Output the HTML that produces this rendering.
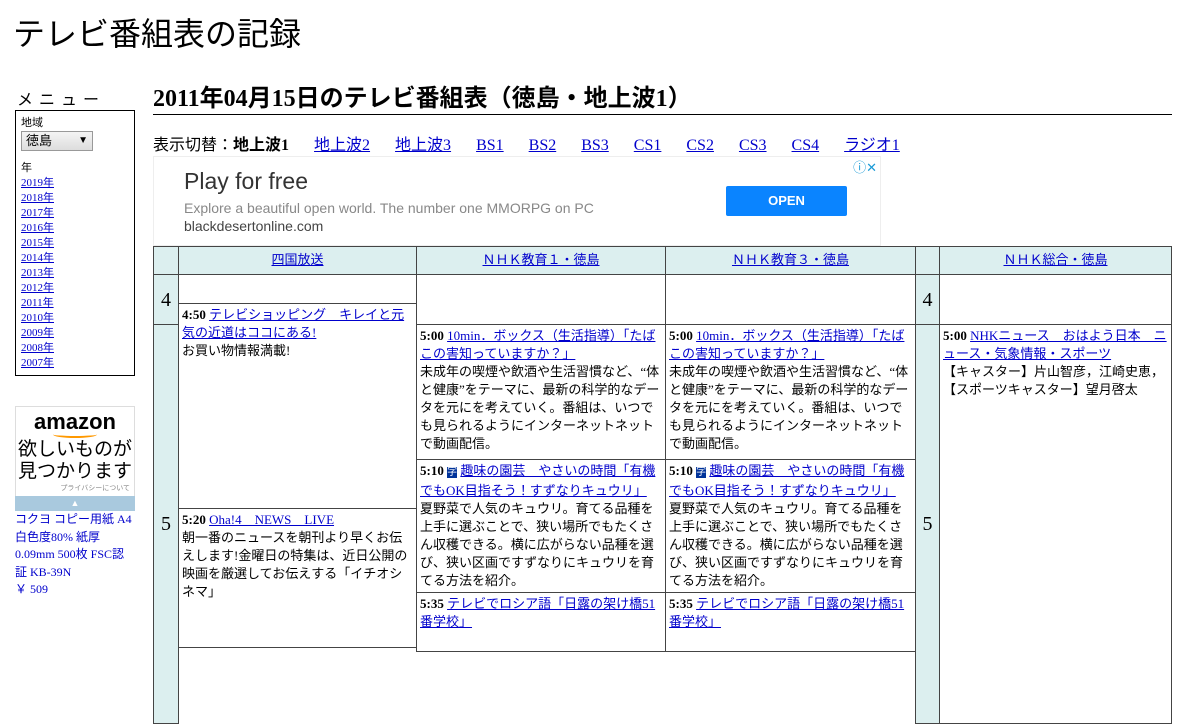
<!DOCTYPE html>
<html><head><meta charset="utf-8"><style>
body{margin:0;width:1200px;height:630px;overflow:hidden;background:#fff;font-family:"Liberation Serif","Noto Sans CJK JP",serif;color:#000;position:relative}
a{color:#00c}
.abs{position:absolute}
.c{position:absolute;border:1px solid #444;box-sizing:border-box;background:#fff;font-size:13px;line-height:18px;padding:2px 3px;overflow:hidden}
.t{background:#dcefef}
.h{background:#dcefef;text-align:center;font-size:13px;padding-top:4px}
.hr{font-size:20px;display:flex;align-items:center;justify-content:center;padding:0}
b{font-weight:bold}
.side a{display:block;font-size:11px;line-height:15px}
</style></head><body>
<div class="abs" style="left:13px;top:13px;font-size:32px;font-family:'Liberation Sans','Noto Sans CJK JP',sans-serif;line-height:42px">テレビ番組表の記録</div>
<div class="abs" style="left:17px;top:86px;font-size:16px;letter-spacing:6px;font-family:'Liberation Sans','Noto Sans CJK JP',sans-serif">メニュー</div>
<div class="abs side" style="left:15px;top:110px;width:120px;height:266px;border:1px solid #000;box-sizing:border-box;padding:5px">
<div style="font-size:11px;line-height:14px;font-family:'Liberation Sans','Noto Sans CJK JP',sans-serif">地域</div>
<div style="width:66px;height:18px;margin-top:1px;border:1px solid #999;background:linear-gradient(#f4f4f4,#ddd);font-size:13px;line-height:18px;padding-left:4px;font-family:'Liberation Sans','Noto Sans CJK JP',sans-serif;position:relative">徳島<span style="position:absolute;right:4px;font-size:10px">▼</span></div>
<div style="font-size:11px;margin-top:9px;line-height:16px;font-family:'Liberation Sans','Noto Sans CJK JP',sans-serif">年</div>
<a href="#">2019年</a><a href="#">2018年</a><a href="#">2017年</a><a href="#">2016年</a><a href="#">2015年</a><a href="#">2014年</a><a href="#">2013年</a><a href="#">2012年</a><a href="#">2011年</a><a href="#">2010年</a><a href="#">2009年</a><a href="#">2008年</a><a href="#">2007年</a>
</div>
<div class="abs" style="left:15px;top:406px;width:120px;height:105px;border:1px solid #ddd;box-sizing:border-box;text-align:center;font-family:'Liberation Sans','Noto Sans CJK JP',sans-serif">
<div style="font-size:22px;font-weight:bold;line-height:24px;margin-top:3px">amazon</div>
<div style="margin:-3px auto 0;width:44px;height:5px;border-bottom:2px solid #f90;border-radius:0 0 50% 50%"></div>
<div style="font-size:19px;line-height:22px;margin-top:1px">欲しいものが<br>見つかります</div>
<div style="font-size:7px;color:#888;text-align:right;padding-right:4px">プライバシーについて</div>
</div>
<div class="abs" style="left:15px;top:496px;width:120px;height:15px;background:#a9c9de;color:#fff;text-align:center;font-size:9px;line-height:15px">▲</div>
<div class="abs" style="left:15px;top:511px;width:118px;font-size:12px;line-height:17.5px;color:#00c">コクヨ コピー用紙 A4 白色度80% 紙厚 0.09mm 500枚 FSC認証 KB-39N<br>￥ 509</div>
<div class="abs" style="left:153px;top:84px;font-size:24px;font-weight:bold;line-height:30px">2011年04月15日のテレビ番組表（徳島・地上波1）</div>
<div class="abs" style="left:153px;top:114px;width:1019px;height:1px;background:#000"></div>
<div class="abs" style="left:153px;top:136px;font-size:16px;line-height:20px;white-space:nowrap">表示切替：<b>地上波1</b><span style="display:inline-block;width:25px"></span><a href="#">地上波2</a><span style="display:inline-block;width:25px"></span><a href="#">地上波3</a><span style="display:inline-block;width:25px"></span><a href="#">BS1</a><span style="display:inline-block;width:25px"></span><a href="#">BS2</a><span style="display:inline-block;width:25px"></span><a href="#">BS3</a><span style="display:inline-block;width:25px"></span><a href="#">CS1</a><span style="display:inline-block;width:25px"></span><a href="#">CS2</a><span style="display:inline-block;width:25px"></span><a href="#">CS3</a><span style="display:inline-block;width:25px"></span><a href="#">CS4</a><span style="display:inline-block;width:25px"></span><a href="#">ラジオ1</a></div>
<div class="abs" style="left:153px;top:156px;width:728px;height:90px;border:1px solid #eee;box-sizing:border-box;font-family:'Liberation Sans',sans-serif">
<div class="abs" style="left:30px;top:11px;font-size:23px;color:#333">Play for free</div>
<div class="abs" style="left:30px;top:43px;font-size:14px;color:#888">Explore a beautiful open world. The number one MMORPG on PC</div>
<div class="abs" style="left:30px;top:61px;font-size:14px;color:#444">blackdesertonline.com</div>
<div class="abs" style="left:572px;top:29px;width:121px;height:30px;background:#0a84ff;color:#fff;font-size:13px;font-weight:bold;text-align:center;line-height:30px;border-radius:2px">OPEN</div>
<div class="abs" style="right:3px;top:0px;font-size:13px;color:#1a9ad6">ⓘ✕</div>
</div>
<div class="c t" style="left:153px;top:246px;width:26px;height:29px"></div>
<div class="c h" style="left:178px;top:246px;width:239px;height:29px"><a href="#">四国放送</a></div>
<div class="c h" style="left:416px;top:246px;width:250px;height:29px"><a href="#">ＮＨＫ教育１・徳島</a></div>
<div class="c h" style="left:665px;top:246px;width:251px;height:29px"><a href="#">ＮＨＫ教育３・徳島</a></div>
<div class="c t" style="left:915px;top:246px;width:25px;height:29px"></div>
<div class="c h" style="left:939px;top:246px;width:233px;height:29px"><a href="#">ＮＨＫ総合・徳島</a></div>
<div class="c t hr" style="left:153px;top:274px;width:26px;height:51px">4</div>
<div class="c t hr" style="left:153px;top:324px;width:26px;height:400px">5</div>
<div class="c t hr" style="left:915px;top:274px;width:25px;height:51px">4</div>
<div class="c t hr" style="left:915px;top:324px;width:25px;height:400px">5</div>
<div class="c" style="left:178px;top:274px;width:239px;height:30px"></div>
<div class="c" style="left:178px;top:303px;width:239px;height:206px"><b>4:50</b> <a href="#">テレビショッピング　キレイと元気の近道はココにある!</a><br>お買い物情報満載!</div>
<div class="c" style="left:178px;top:508px;width:239px;height:140px"><b>5:20</b> <a href="#">Oha!4　NEWS　LIVE</a><br>朝一番のニュースを朝刊より早くお伝えします!金曜日の特集は、近日公開の映画を厳選してお伝えする「イチオシネマ」</div>
<div class="c" style="left:416px;top:274px;width:250px;height:51px"></div>
<div class="c" style="left:665px;top:274px;width:251px;height:51px"></div>
<div class="c" style="left:939px;top:274px;width:233px;height:51px"></div>
<div class="c" style="left:416px;top:324px;width:250px;height:136px"><b>5:00</b> <a href="#">10min．ボックス（生活指導）「たばこの害知っていますか？」</a><br>未成年の喫煙や飲酒や生活習慣など、“体と健康”をテーマに、最新の科学的なデータを元にを考えていく。番組は、いつでも見られるようにインターネットネットで動画配信。</div>
<div class="c" style="left:665px;top:324px;width:251px;height:136px"><b>5:00</b> <a href="#">10min．ボックス（生活指導）「たばこの害知っていますか？」</a><br>未成年の喫煙や飲酒や生活習慣など、“体と健康”をテーマに、最新の科学的なデータを元にを考えていく。番組は、いつでも見られるようにインターネットネットで動画配信。</div>
<div class="c" style="left:416px;top:459px;width:250px;height:134px"><b>5:10</b> <span style="color:#fff;background:#00339a;font-size:10px">字</span> <a href="#">趣味の園芸　やさいの時間「有機でもOK目指そう！すずなりキュウリ」</a><br>夏野菜で人気のキュウリ。育てる品種を上手に選ぶことで、狭い場所でもたくさん収穫できる。横に広がらない品種を選び、狭い区画ですずなりにキュウリを育てる方法を紹介。</div>
<div class="c" style="left:665px;top:459px;width:251px;height:134px"><b>5:10</b> <span style="color:#fff;background:#00339a;font-size:10px">字</span> <a href="#">趣味の園芸　やさいの時間「有機でもOK目指そう！すずなりキュウリ」</a><br>夏野菜で人気のキュウリ。育てる品種を上手に選ぶことで、狭い場所でもたくさん収穫できる。横に広がらない品種を選び、狭い区画ですずなりにキュウリを育てる方法を紹介。</div>
<div class="c" style="left:416px;top:592px;width:250px;height:60px"><b>5:35</b> <a href="#">テレビでロシア語「日露の架け橋51番学校」</a></div>
<div class="c" style="left:665px;top:592px;width:251px;height:60px"><b>5:35</b> <a href="#">テレビでロシア語「日露の架け橋51番学校」</a></div>
<div class="c" style="left:939px;top:324px;width:233px;height:400px"><b>5:00</b> <a href="#">NHKニュース　おはよう日本　ニュース・気象情報・スポーツ</a><br>【キャスター】片山智彦，江崎史恵，【スポーツキャスター】望月啓太</div>
</body></html>
